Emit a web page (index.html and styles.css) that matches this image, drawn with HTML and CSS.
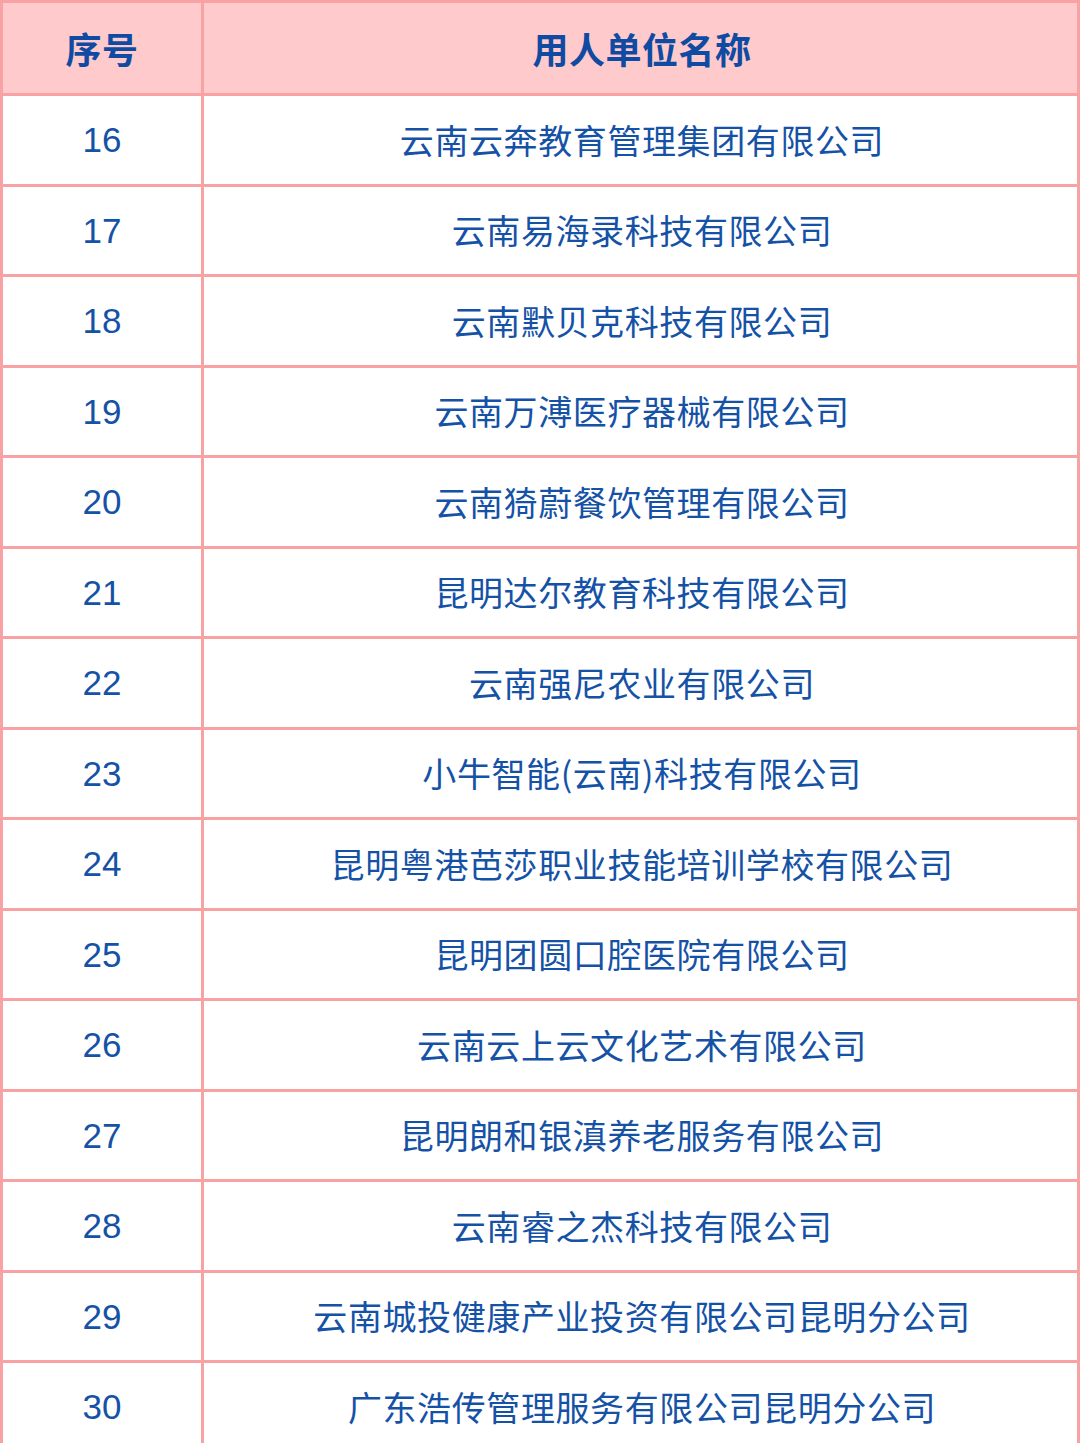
FILE: index.html
```html
<!DOCTYPE html>
<html lang="zh-CN">
<head>
<meta charset="utf-8">
<link rel="stylesheet" href="styles.css">
</head>
<body>
<div class="table">
  <div class="cell head num">序号</div>
  <div class="cell head name">用人单位名称</div>
  <div class="cell num">16</div><div class="cell name">云南云奔教育管理集团有限公司</div>
  <div class="cell num">17</div><div class="cell name">云南易海录科技有限公司</div>
  <div class="cell num">18</div><div class="cell name">云南默贝克科技有限公司</div>
  <div class="cell num">19</div><div class="cell name">云南万溥医疗器械有限公司</div>
  <div class="cell num">20</div><div class="cell name">云南猗蔚餐饮管理有限公司</div>
  <div class="cell num">21</div><div class="cell name">昆明达尔教育科技有限公司</div>
  <div class="cell num">22</div><div class="cell name">云南强尼农业有限公司</div>
  <div class="cell num">23</div><div class="cell name">小牛智能(云南)科技有限公司</div>
  <div class="cell num">24</div><div class="cell name">昆明粤港芭莎职业技能培训学校有限公司</div>
  <div class="cell num">25</div><div class="cell name">昆明团圆口腔医院有限公司</div>
  <div class="cell num">26</div><div class="cell name">云南云上云文化艺术有限公司</div>
  <div class="cell num">27</div><div class="cell name">昆明朗和银滇养老服务有限公司</div>
  <div class="cell num">28</div><div class="cell name">云南睿之杰科技有限公司</div>
  <div class="cell num">29</div><div class="cell name">云南城投健康产业投资有限公司昆明分公司</div>
  <div class="cell num">30</div><div class="cell name">广东浩传管理服务有限公司昆明分公司</div>
</div>
</body>
</html>
```
FILE: styles.css
```css
html, body {
  margin: 0;
  padding: 0;
  background: #ffffff;
}
body {
  width: 1080px;
  height: 1443px;
  overflow: hidden;
  font-family: "Noto Sans CJK SC", "Noto Sans", sans-serif;
}
.table {
  display: grid;
  grid-template-columns: 201px 876px;
  grid-template-rows: 93px;
  grid-auto-rows: 90.5px;
  border-top: 3px solid #f8a2a3;
  border-left: 3px solid #f8a2a3;
  width: 1077px;
}
.cell {
  border-right: 3px solid #f8a2a3;
  border-bottom: 3px solid #f8a2a3;
  display: flex;
  align-items: center;
  justify-content: center;
  color: #1552a6;
  font-size: 34px;
  line-height: 1;
}
.num {
  font-family: "Liberation Sans", "Noto Sans CJK SC", sans-serif;
  font-size: 35px;
}
.name {
  letter-spacing: 0.6px;
  padding-left: 3px;
}
.head {
  background: #ffcacb;
  color: #0f4aa3;
  font-family: "Noto Sans CJK SC", sans-serif;
  font-weight: 700;
  font-size: 36px;
  letter-spacing: 0.5px;
}
```
